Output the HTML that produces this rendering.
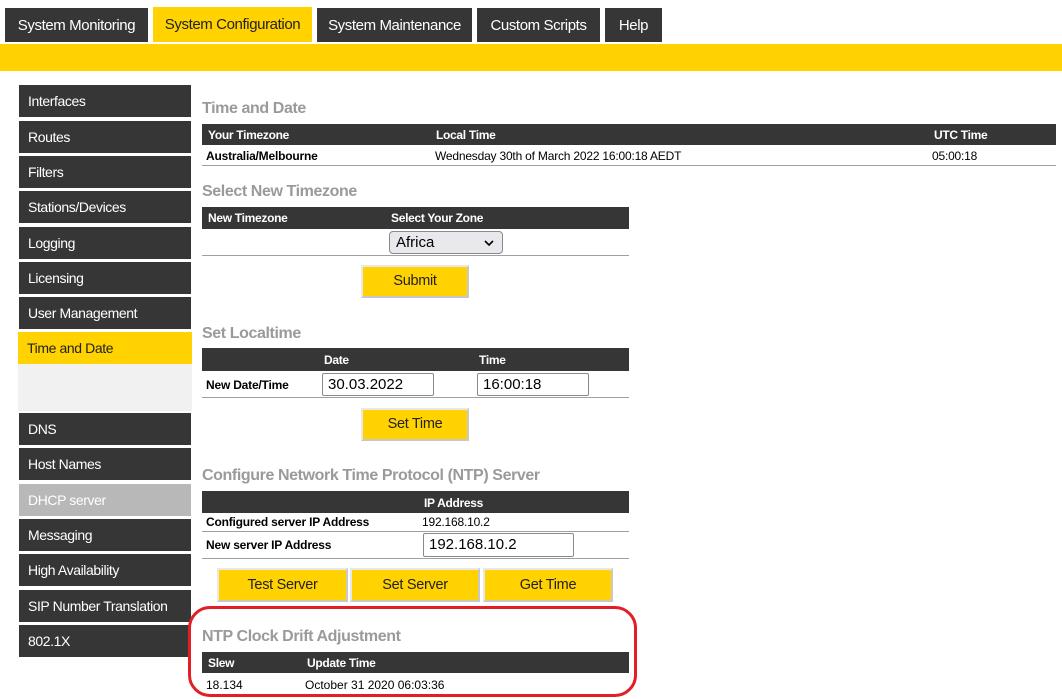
<!DOCTYPE html>
<html><head><meta charset="utf-8"><style>
*{margin:0;padding:0;box-sizing:border-box}
body{width:1062px;height:699px;background:#fff;position:relative;overflow:hidden;font-family:"Liberation Sans",sans-serif;}
.a{position:absolute}
.tab{position:absolute;top:8px;height:34px;background:#363636;color:#fff;font-size:15px;letter-spacing:-0.4px;text-align:center;line-height:36px}
.side{position:absolute;left:19px;width:172px;height:32px;background:#363636;color:#fff;font-size:14px;letter-spacing:-0.4px;line-height:32px;padding-left:9px}
.h{position:absolute;left:202px;color:#9a9a9a;font-weight:bold;font-size:16px;letter-spacing:-0.4px}
.th{position:absolute;background:#363636;color:#fff;font-weight:bold;font-size:12px;letter-spacing:-0.3px}
.th span,.row span{position:absolute}
.row{position:absolute;border-bottom:1.5px solid #a0a0a0;font-size:12px;color:#000;letter-spacing:-0.2px}
.b{font-weight:bold}
.btn{position:absolute;background:#ffd200;border:2px solid #c8c8c8;border-top-color:#e8e8e8;border-left-color:#e8e8e8;font-size:14.5px;letter-spacing:-0.3px;text-align:center;color:#222}
.inp{position:absolute;border:1px solid #8a8a8a;border-radius:2px;font-size:15px;padding-left:5px;background:#fff}
</style></head><body>
<div class="tab" style="left:5px;width:143px">System Monitoring</div>
<div class="tab" style="left:153px;top:7px;width:159px;height:35px;background:#ffd200;color:#222;line-height:35px">System Configuration</div>
<div class="tab" style="left:317px;width:155px">System Maintenance</div>
<div class="tab" style="left:477px;width:123px">Custom Scripts</div>
<div class="tab" style="left:605px;width:57px">Help</div>
<div class="a" style="left:0;top:44px;width:1062px;height:27px;background:#ffd200"></div>

<div class="side" style="top:85px">Interfaces</div>
<div class="side" style="top:121px">Routes</div>
<div class="side" style="top:156px">Filters</div>
<div class="side" style="top:191px">Stations/Devices</div>
<div class="side" style="top:227px">Logging</div>
<div class="side" style="top:262px">Licensing</div>
<div class="side" style="top:297px">User Management</div>
<div class="side" style="top:332px;left:18px;width:174px;background:#ffd200;color:#222">Time and Date</div>
<div class="a" style="left:18px;top:364px;width:174px;height:47px;background:#f1f1f1"></div>
<div class="side" style="top:413px">DNS</div>
<div class="side" style="top:448px">Host Names</div>
<div class="side" style="top:484px;background:#b8b8b8">DHCP server</div>
<div class="side" style="top:519px">Messaging</div>
<div class="side" style="top:554px">High Availability</div>
<div class="side" style="top:590px">SIP Number Translation</div>
<div class="side" style="top:625px">802.1X</div>

<div class="h" style="top:100px">Time and Date</div>
<div class="th" style="left:202px;top:124px;width:854px;height:21px"><span style="left:6px;top:4px">Your Timezone</span><span style="left:234px;top:4px">Local Time</span><span style="left:732px;top:4px">UTC Time</span></div>
<div class="row" style="left:202px;top:145px;width:854px;height:21px"><span class="b" style="left:4px;top:4px">Australia/Melbourne</span><span style="left:233px;top:4px">Wednesday 30th of March 2022 16:00:18 AEDT</span><span style="left:730px;top:4px">05:00:18</span></div>

<div class="h" style="top:183px">Select New Timezone</div>
<div class="th" style="left:202px;top:207px;width:427px;height:22px"><span style="left:6px;top:4px">New Timezone</span><span style="left:189px;top:4px">Select Your Zone</span></div>
<div class="row" style="left:202px;top:229px;width:427px;height:27px"></div>
<div class="a" style="left:389px;top:231px;width:114px;height:23px;border:1px solid #8a8a8a;border-radius:4px;background:#e9e9ed;font-size:15px;padding:2px 0 0 6px">Africa<svg style="position:absolute;right:8px;top:8px" width="10" height="7" viewBox="0 0 10 7"><path d="M1 1l4 4 4-4" fill="none" stroke="#000" stroke-width="1.6"/></svg></div>
<div class="btn" style="left:361px;top:265px;width:108px;height:33px;line-height:29px">Submit</div>

<div class="h" style="top:325px">Set Localtime</div>
<div class="th" style="left:202px;top:348px;width:427px;height:23px"><span style="left:122px;top:5px">Date</span><span style="left:277px;top:5px">Time</span></div>
<div class="row" style="left:202px;top:371px;width:427px;height:27px"><span class="b" style="left:4px;top:7px">New Date/Time</span></div>
<div class="inp" style="left:322px;top:373px;width:112px;height:23px;line-height:21px">30.03.2022</div>
<div class="inp" style="left:477px;top:373px;width:112px;height:23px;line-height:21px">16:00:18</div>
<div class="btn" style="left:361px;top:408px;width:108px;height:33px;line-height:29px">Set Time</div>

<div class="h" style="top:467px">Configure Network Time Protocol (NTP) Server</div>
<div class="th" style="left:202px;top:491px;width:427px;height:22px"><span style="left:222px;top:5px">IP Address</span></div>
<div class="row" style="left:202px;top:513px;width:427px;height:19px"><span class="b" style="left:4px;top:2px">Configured server IP Address</span><span style="left:220px;top:2px">192.168.10.2</span></div>
<div class="row" style="left:202px;top:532px;width:427px;height:27px"><span class="b" style="left:4px;top:6px">New server IP Address</span></div>
<div class="inp" style="left:423px;top:533px;width:151px;height:24px;line-height:22px">192.168.10.2</div>
<div class="btn" style="left:217px;top:568px;width:131px;height:34px;line-height:31px">Test Server</div>
<div class="btn" style="left:350px;top:568px;width:130px;height:34px;line-height:31px">Set Server</div>
<div class="btn" style="left:483px;top:568px;width:130px;height:34px;line-height:31px">Get Time</div>

<div class="h" style="top:628px">NTP Clock Drift Adjustment</div>
<div class="th" style="left:202px;top:652px;width:427px;height:21px"><span style="left:6px;top:4px">Slew</span><span style="left:105px;top:4px">Update Time</span></div>
<div class="a" style="left:206px;top:678px;font-size:12px">18.134</div>
<div class="a" style="left:305px;top:678px;font-size:12px">October 31 2020 06:03:36</div>
<div class="a" style="left:188px;top:606px;width:449px;height:91px;border:3px solid #e21f26;border-radius:22px"></div>
</body></html>
